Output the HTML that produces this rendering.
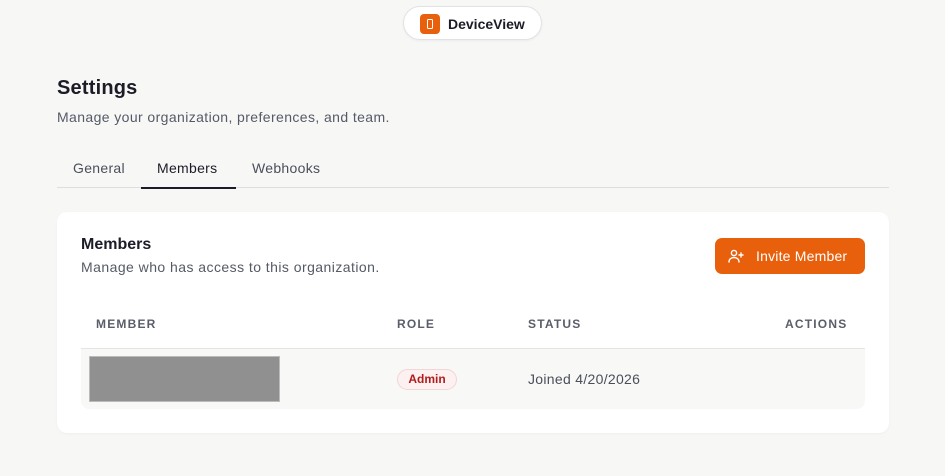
<!DOCTYPE html>
<html><head><style>
*{margin:0;padding:0;box-sizing:border-box}
body{width:945px;height:476px;background:#f7f7f6;font-family:"Liberation Sans",sans-serif;color:#1c1c28;position:relative;overflow:hidden}
.pill{position:absolute;left:403px;top:6px;width:139px;height:34px;background:#fff;border:1px solid #e2e2e2;border-radius:17px;box-shadow:0 1px 2px rgba(0,0,0,.05)}
.logo{position:absolute;left:16px;top:7px;width:20px;height:20px;background:#e8600c;border-radius:4px}
.logo i{position:absolute;left:7px;top:5px;width:6px;height:10px;border:1.5px solid #fff;border-radius:1.5px}
.pill b{position:absolute;left:44px;top:9px;font-size:14px}
h1{position:absolute;left:57px;top:77px;font-size:20px;font-weight:bold;letter-spacing:.2px}
.sub{position:absolute;left:57px;top:109px;font-size:14px;color:#555a66;letter-spacing:.4px}
.tabs{position:absolute;left:57px;top:150px;width:832px;height:38px;border-bottom:1px solid #dedede;font-size:14px;color:#4a4f5a;letter-spacing:.3px}
.tabs span{position:absolute;top:10px}
.tabs .a{color:#1c1c28;border-bottom:2px solid #1c1c28;padding:0 16px 11px;left:84px;width:95px}
.card{position:absolute;left:57px;top:212px;width:832px;height:221px;background:#fff;border-radius:10px;box-shadow:0 1px 2px rgba(0,0,0,.04)}
.card h2{position:absolute;left:24px;top:24px;font-size:16px;font-weight:600}
.card p{position:absolute;left:24px;top:47px;font-size:14px;color:#555a66;letter-spacing:.45px}
.btn{position:absolute;left:658px;top:26px;width:150px;height:36px;background:#e8600c;border-radius:7px;color:#fff;font-size:14px;letter-spacing:.2px}
.btn span{position:absolute;left:41px;top:10px}
.btn svg{position:absolute;left:13px;top:11px}
.th{position:absolute;top:105px;font-size:12px;font-weight:700;letter-spacing:1.2px;color:#5a5e6a}
.row{position:absolute;left:24px;top:136px;width:784px;height:61px;background:#f8f8f7;border-top:1px solid #e4e4e4;border-radius:0 0 8px 8px}
.gray{position:absolute;left:8px;top:7px;width:191px;height:46px;background:#909090;border:1px solid #bbb}
.badge{position:absolute;left:316px;top:20px;width:60px;height:21px;border:1px solid #f0d6d6;background:#fdf0f0;border-radius:11px;color:#b01c1c;font-size:12px;font-weight:600;text-align:center;line-height:19px}
.join{position:absolute;left:447px;top:22px;font-size:14px;color:#4a4f5a;letter-spacing:.3px}
</style></head><body>
<div class="pill"><div class="logo"><i></i></div><b>DeviceView</b></div>
<h1>Settings</h1>
<div class="sub">Manage your organization, preferences, and team.</div>
<div class="tabs"><span style="left:16px">General</span><span class="a">Members</span><span style="left:195px">Webhooks</span></div>
<div class="card">
<h2>Members</h2><p>Manage who has access to this organization.</p>
<div class="btn"><svg width="16" height="14" viewBox="0 0 16 14" fill="none" stroke="#fff" stroke-width="1.4" stroke-linecap="round"><circle cx="6" cy="4" r="2.6"/><path d="M1 13c0-3 2.2-4.5 5-4.5s5 1.5 5 4.5"/><path d="M13 4v4M11 6h4"/></svg><span>Invite Member</span></div>
<div class="th" style="left:39px">MEMBER</div>
<div class="th" style="left:340px">ROLE</div>
<div class="th" style="left:471px">STATUS</div>
<div class="th" style="left:728px">ACTIONS</div>
<div class="row"><div class="gray"></div><div class="badge">Admin</div><div class="join">Joined 4/20/2026</div></div>
</div>
</body></html>
